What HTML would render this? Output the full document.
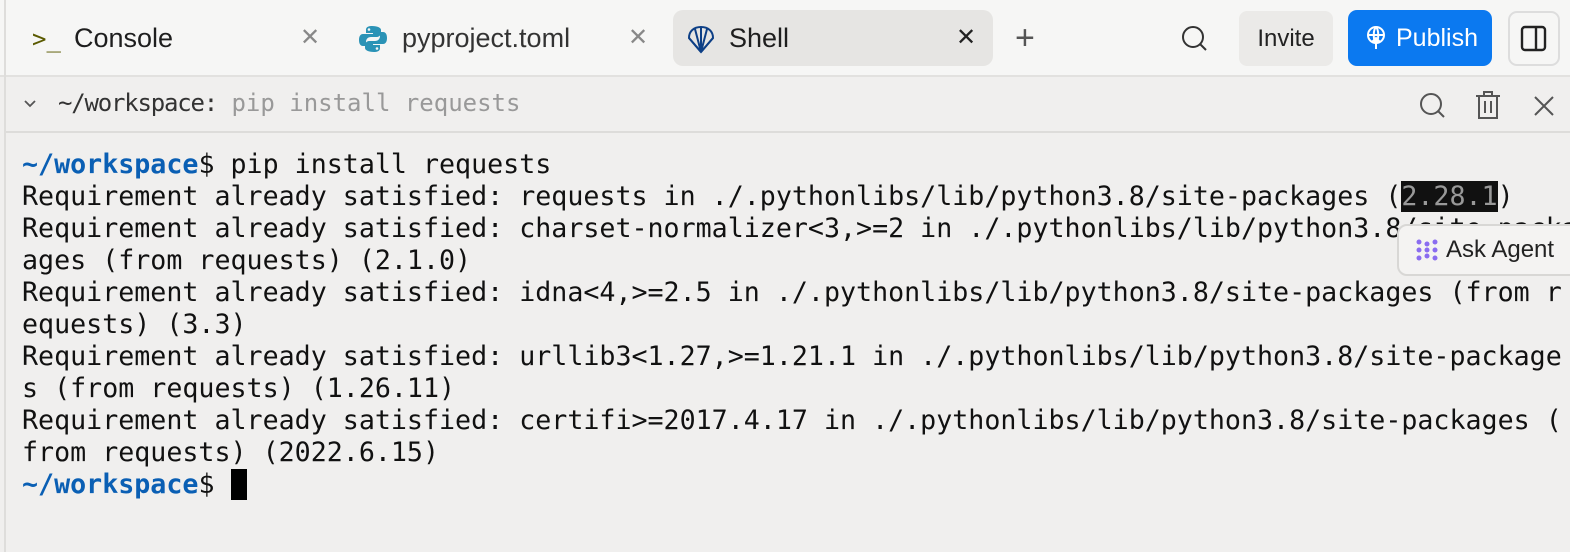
<!DOCTYPE html>
<html><head><meta charset="utf-8"><style>
*{margin:0;padding:0;box-sizing:border-box}
body{width:1570px;height:552px;overflow:hidden;background:#f0efee;font-family:"Liberation Sans",sans-serif;position:relative}
.top{position:absolute;left:0;top:0;width:1570px;height:77px;background:#f6f6f5;border-bottom:2px solid #e2e1df}
.lb{position:absolute;left:4px;top:0;width:2px;height:552px;background:#dedddb}
.tab{position:absolute;top:11px;height:55px;font-size:27px;color:#1e1e1e;line-height:55px}
.x{position:absolute;font-size:24px;color:#888;top:24px;line-height:28px}
.bar2{position:absolute;left:6px;top:77px;width:1564px;height:56px;background:#f0efee;border-bottom:2px solid #dddcda}
.term{position:absolute;left:22px;top:149px;font-family:"DejaVu Sans Mono","Liberation Mono",monospace;font-size:26.65px;line-height:32px;color:#111;white-space:pre}
.p{color:#0a5fb4;font-weight:bold}
</style></head><body>
<div class="top"></div>
<div class="lb"></div>
<div class="tab" style="left:32px;"><span style="color:#5a5a00;font-family:'DejaVu Sans Mono',monospace;font-size:24px">&gt;_</span></div>
<div class="tab" style="left:74px">Console</div>
<div class="x" style="left:300px">✕</div>
<svg style="position:absolute;left:358px;top:24px" width="30" height="30" viewBox="0 0 30 30"><path d="M14 2c-6 0-6 3-6 4v3h7v1H5c-3 0-4 3-4 6s1 6 4 6h3v-4c0-3 2-5 5-5h6c2 0 4-2 4-4V6c0-2-3-4-9-4z" fill="#2b93b6"/><path d="M16 28c6 0 6-3 6-4v-3h-7v-1h10c3 0 4-3 4-6s-1-6-4-6h-3v4c0 3-2 5-5 5h-6c-2 0-4 2-4 4v3c0 2 3 4 9 4z" fill="#2b93b6"/><circle cx="11" cy="5.5" r="1.3" fill="#f6f6f5"/><circle cx="19" cy="24.5" r="1.3" fill="#f6f6f5"/></svg>
<div class="tab" style="left:402px;color:#333">pyproject.toml</div>
<div class="x" style="left:628px">✕</div>
<div style="position:absolute;left:673px;top:10px;width:320px;height:56px;background:#e6e5e3;border-radius:10px"></div>
<svg style="position:absolute;left:686px;top:24px" width="30" height="30" viewBox="0 0 30 30" fill="none" stroke="#0d3f86" stroke-width="2"><path d="M15 28 3 14C3 7 8 3 15 3s12 4 12 11z"/><path d="M15 28 9 5M15 28 21 5M15 28V3M15 28 3 14M15 28 27 14"/></svg>
<div class="tab" style="left:729px">Shell</div>
<div class="x" style="left:956px;color:#222">✕</div>
<div style="position:absolute;left:1015px;top:20px;font-size:34px;color:#555;font-weight:300;line-height:36px">+</div>
<svg style="position:absolute;left:1180px;top:24px" width="30" height="30" viewBox="0 0 30 30" fill="none" stroke="#333" stroke-width="2"><circle cx="13" cy="13" r="10"/><path d="M20 20l6 6"/></svg>
<div style="position:absolute;left:1239px;top:11px;width:94px;height:55px;background:#ebeae8;border-radius:8px;font-size:24px;color:#222;text-align:center;line-height:55px">Invite</div>
<div style="position:absolute;left:1348px;top:10px;width:144px;height:56px;background:#0b79f0;border-radius:9px;color:#fff;font-size:25px;line-height:56px"><svg style="position:absolute;left:16px;top:16px" width="24" height="24" viewBox="0 0 24 24" fill="none" stroke="#fff" stroke-width="2"><circle cx="12" cy="9" r="8"/><path d="M4 9h16M12 1c-3 3-3 13 0 16c3-3 3-13 0-16M12 23V12M8 16l4-4 4 4"/></svg><span style="position:absolute;left:48px">Publish</span></div>
<div style="position:absolute;left:1508px;top:11px;width:52px;height:55px;border:2px solid #ddd;border-radius:9px"></div>
<svg style="position:absolute;left:1520px;top:25px" width="28" height="28" viewBox="0 0 28 28" fill="none" stroke="#222" stroke-width="2.4"><rect x="2" y="2" width="23" height="23" rx="3"/><path d="M16 2v23"/></svg>
<div class="bar2"></div>
<svg style="position:absolute;left:23px;top:99px" width="14" height="10" viewBox="0 0 14 10" fill="none" stroke="#555" stroke-width="1.8"><path d="M2 2l5 5 5-5"/></svg>
<div style="position:absolute;left:58px;top:89px;font-family:'DejaVu Sans Mono',monospace;font-size:24px;color:#333;letter-spacing:-1.2px">~/workspace:<span style="color:#999;letter-spacing:0"> pip install requests</span></div>
<svg style="position:absolute;left:1418px;top:91px" width="30" height="30" viewBox="0 0 30 30" fill="none" stroke="#555" stroke-width="2"><circle cx="13" cy="13" r="10"/><path d="M20 20l6 6"/></svg>
<svg style="position:absolute;left:1474px;top:89px" width="28" height="32" viewBox="0 0 28 32" fill="none" stroke="#555" stroke-width="2"><path d="M2 7h24M10 7V3h8v4M5 7v22h18V7M11 12v12M17 12v12"/></svg>
<svg style="position:absolute;left:1533px;top:95px" width="22" height="22" viewBox="0 0 22 22" stroke="#555" stroke-width="2"><path d="M2 2l18 18M20 2 2 20"/></svg>
<div class="term"><span class="p">~/workspace</span>$ pip install requests
Requirement already satisfied: requests in ./.pythonlibs/lib/python3.8/site-packages (<span style="background:#111;color:#999">2.28.1</span>)
Requirement already satisfied: charset-normalizer&lt;3,&gt;=2 in ./.pythonlibs/lib/python3.8/site-packa
ages (from requests) (2.1.0)
Requirement already satisfied: idna&lt;4,&gt;=2.5 in ./.pythonlibs/lib/python3.8/site-packages (from r
equests) (3.3)
Requirement already satisfied: urllib3&lt;1.27,&gt;=1.21.1 in ./.pythonlibs/lib/python3.8/site-package
s (from requests) (1.26.11)
Requirement already satisfied: certifi&gt;=2017.4.17 in ./.pythonlibs/lib/python3.8/site-packages (
from requests) (2022.6.15)
<span class="p">~/workspace</span>$ <span style="background:#000">&#160;</span></div>
<div style="position:absolute;left:1397px;top:224px;width:185px;height:52px;background:#f4f3f2;border:2px solid #d8d7d5;border-radius:10px;font-size:24px;color:#222;line-height:48px"><svg style="position:absolute;left:17px;top:13px" width="22" height="22" viewBox="0 0 22 22" fill="#8a6cf0"><circle cx="3" cy="3" r="2.5"/><circle cx="3" cy="11" r="2.5"/><circle cx="3" cy="19" r="2.5"/><circle cx="11" cy="5" r="2.5"/><circle cx="11" cy="11" r="2.5"/><circle cx="11" cy="17" r="2.5"/><circle cx="19" cy="3" r="2.5"/><circle cx="19" cy="11" r="2.5"/><circle cx="19" cy="19" r="2.5"/></svg><span style="position:absolute;left:47px">Ask Agent</span></div>
</body></html>
